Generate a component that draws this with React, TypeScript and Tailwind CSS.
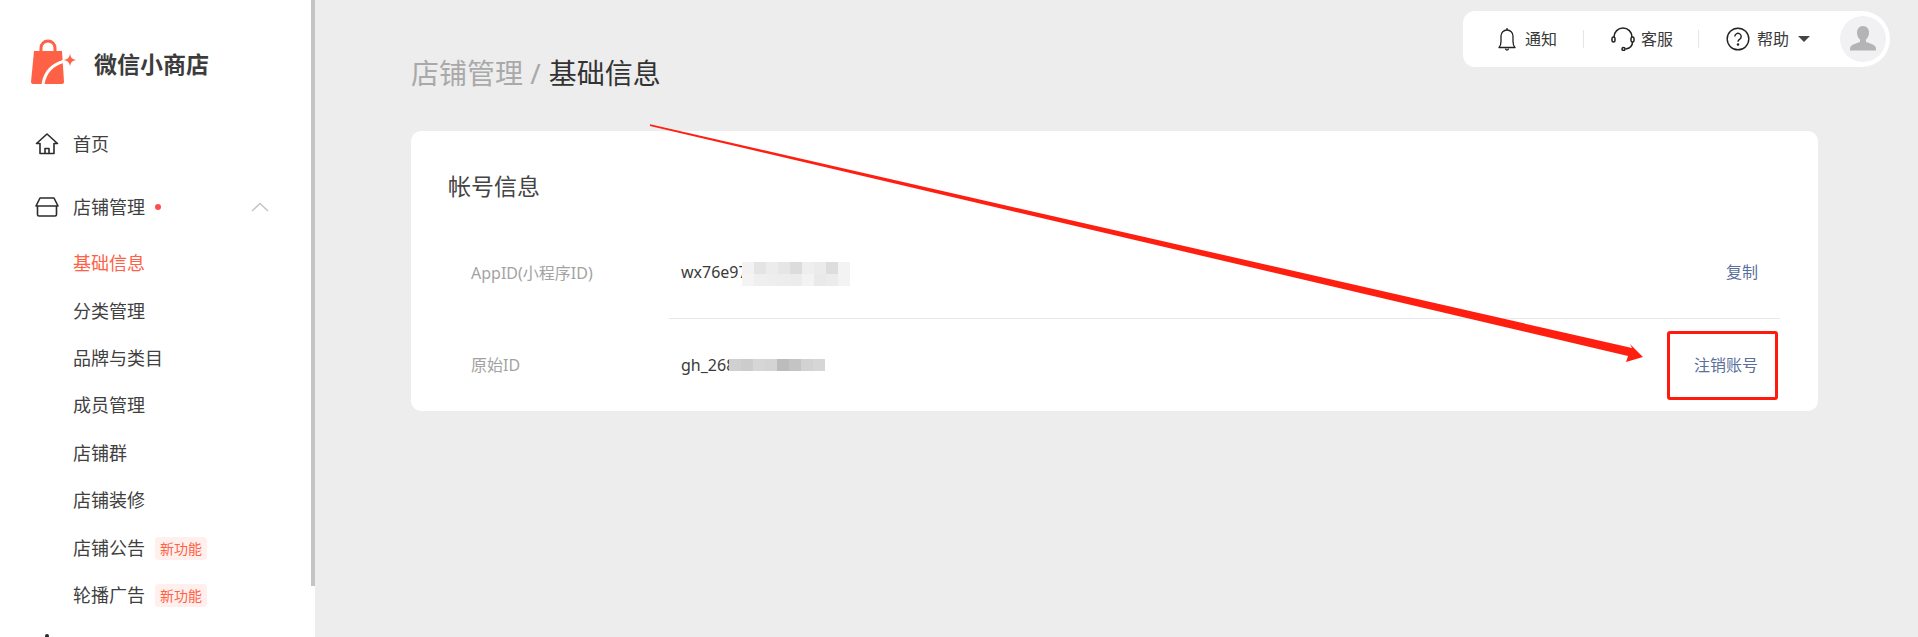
const subItems = [
  { label: "基础信息", active: true },
  { label: "分类管理" },
  { label: "品牌与类目" },
  { label: "成员管理" },
  { label: "店铺群" },
  { label: "店铺装修" },
  { label: "店铺公告", badge: true },
  { label: "轮播广告", badge: true },
];

const appIdCells = [
  ["bg-[#f2f2f2]", "bg-[#e4e4e4]", "bg-[#ececec]", "bg-[#e6e6e6]", "bg-[#dcdcdc]", "bg-[#eeeeee]", "bg-[#ebebeb]", "bg-[#dddddd]", "bg-[#f3f3f3]"],
  ["bg-[#f4f4f4]", "bg-[#efefef]", "bg-[#eeeeee]", "bg-[#ededed]", "bg-[#ececec]", "bg-[#f3f3f3]", "bg-[#e9e9e9]", "bg-[#ececec]", "bg-[#f3f3f3]"],
];

const rawIdCells = [
  "bg-[#d0d0d0]", "bg-[#cccccc]", "bg-[#d6d6d6]", "bg-[#d4d4d4]", "bg-[#bcbcbc]", "bg-[#c4c4c4]", "bg-[#d2d2d2]", "bg-[#d6d6d6]",
];

function Logo() {
  return (
    <svg width="48" height="50" viewBox="0 0 48 50" className="shrink-0">
      <path d="M11 13V9a7 7 0 0 1 14 0v4" fill="none" stroke="#ff6146" strokeWidth="3" />
      <path d="M4 12h28l2 31a2 2 0 0 1-2 2H3a2 2 0 0 1-2-2z" fill="#ff6146" />
      <path d="M13 45c2-12 10-20 22-23" fill="none" stroke="#fff" strokeWidth="3" />
      <path d="M40 15c1 4 2 5 6 6-4 1-5 2-6 6-1-4-2-5-6-6 4-1 5-2 6-6z" fill="#ff6146" />
    </svg>
  );
}

function HomeIcon() {
  return (
    <svg width="24" height="22" viewBox="0 0 24 22" fill="none" stroke="#2b2b2b" strokeWidth="1.6" strokeLinejoin="round">
      <path d="M1.500 10.500 12 1l10.500 9.500h-3.500V20.500H5V10.500z" />
      <path d="M10 20.500v-5h4v5" />
    </svg>
  );
}

function StoreIcon() {
  return (
    <svg width="24" height="20" viewBox="0 0 24 20" fill="none" stroke="#2b2b2b" strokeWidth="1.6" strokeLinejoin="round">
      <path d="M5 1h14l4 8H1z" />
      <path d="M2.500 9v8.500a1.500 1.500 0 0 0 1.500 1.500h16a1.500 1.500 0 0 0 1.500-1.500V9" />
    </svg>
  );
}

function BellIcon() {
  return (
    <svg width="18" height="24" viewBox="0 0 18 24" fill="none" stroke="#222" strokeWidth="1.3" strokeLinejoin="round">
      <path d="M1 20.500c1.500-1.500 2-3 2-6V9a6 6 0 0 1 12 0v5.500c0 3 .5 4.500 2 6z" />
      <path d="M9 3V1M7.500 21.500a1.500 1.500 0 0 0 3 0" />
    </svg>
  );
}

function HeadsetIcon() {
  return (
    <svg width="24" height="24" viewBox="0 0 24 24" fill="none" stroke="#222" strokeWidth="1.5">
      <path d="M3 10a9 9 0 0 1 18 0" />
      <rect x="1" y="10" width="3" height="5" rx="1.500" />
      <rect x="20" y="10" width="3" height="5" rx="1.500" />
      <path d="M21.500 15c0 4-3 6.500-7 7" />
      <circle cx="12.500" cy="22" r="1.500" />
    </svg>
  );
}

function HelpIcon() {
  return (
    <svg width="24" height="24" viewBox="0 0 24 24" fill="none" stroke="#222" strokeWidth="1.4">
      <circle cx="12" cy="12" r="10.800" />
      <path d="M8.800 9.500a3.200 3.200 0 1 1 4.800 2.800c-1 .6-1.600 1.200-1.600 2.500" />
      <circle cx="12" cy="17.500" r=".6" fill="#222" />
    </svg>
  );
}

function AvatarIcon() {
  return (
    <svg width="26" height="26" viewBox="0 0 26 26" fill="#b4b4b6">
      <path d="M13 0c4 0 6 3 6 6.500 0 3-1.200 5.500-3 7v2.500c3 1.200 7 2 9 4 1 1 1 3 1 4.500H0c0-1.500 0-3.500 1-4.500 2-2 6-2.800 9-4v-2.500c-1.800-1.500-3-4-3-7C7 3 9 0 13 0z" />
    </svg>
  );
}

function Badge() {
  return (
    <span className="ml-[10px] flex h-[23px] w-[52px] items-center justify-center rounded-[4px] bg-[#fff0ee] text-[14px] text-[#ff6146]">
      新功能
    </span>
  );
}

function Sidebar() {
  return (
    <aside className="relative h-full w-[315px] shrink-0 overflow-hidden bg-white text-[18px] text-[#404040]">
      <div className="flex h-[115px] items-center pt-[13px] pl-[30px]">
        <Logo />
        <span className="ml-[16px] text-[23px] leading-[30px] font-bold text-[#3c3c3c]">微信小商店</span>
      </div>
      <nav>
        <div className="flex h-[58px] items-center pl-[35px]">
          <HomeIcon />
          <span className="ml-[14px]">首页</span>
        </div>
        <div className="mt-[5px] flex h-[58px] items-center pl-[35px]">
          <StoreIcon />
          <span className="ml-[14px]">店铺管理</span>
          <span className="ml-[10px] h-[6px] w-[6px] rounded-full bg-[#ff4d4f]" />
          <svg width="18" height="10" viewBox="0 0 18 10" fill="none" stroke="#c4c4c4" strokeWidth="1.5" className="ml-auto mr-[46px]">
            <path d="M1 9 9 1.500 17 9" />
          </svg>
        </div>
        <div className="mt-[4px]">
          {subItems.map((item) => (
            <div key={item.label} className="flex h-[47.4px] items-center pl-[73px]">
              <span className={item.active ? "text-[#ff6146]" : ""}>{item.label}</span>
              {item.badge && <Badge />}
            </div>
          ))}
        </div>
        <div className="mt-[15px] pl-[45px]">
          <div className="h-[4px] w-[4px] rounded-full bg-[#2b2b2b]" />
        </div>
      </nav>
      <div className="absolute top-0 right-0 h-[586px] w-[4px] bg-[#c4c4c4]" />
    </aside>
  );
}

function TopBar() {
  return (
    <div className="flex h-[56px] w-[427px] items-center self-end rounded-l-[12px] rounded-r-[28px] bg-white text-[16px] text-[#3a3a3a]">
      <div className="ml-[35px] flex items-center">
        <BellIcon />
        <span className="ml-[9px]">通知</span>
      </div>
      <div className="ml-[26px] h-[18px] w-px bg-[#e6e6e6]" />
      <div className="ml-[27px] flex items-center">
        <HeadsetIcon />
        <span className="ml-[6px]">客服</span>
      </div>
      <div className="ml-[25px] h-[18px] w-px bg-[#e6e6e6]" />
      <div className="ml-[27px] flex items-center">
        <HelpIcon />
        <span className="ml-[7px]">帮助</span>
        <span className="ml-[9px] h-0 w-0 border-x-[6px] border-t-[6px] border-x-transparent border-t-[#444]" />
      </div>
      <div className="mr-[4px] ml-auto flex h-[46px] w-[46px] items-center justify-center rounded-full bg-[#f1f1f3]">
        <AvatarIcon />
      </div>
    </div>
  );
}

function AccountCard() {
  return (
    <section className="relative mt-[39px] h-[280px] w-[1407px] rounded-[10px] bg-white">
      <h2 className="flex h-[95px] items-center pt-[15px] pl-[37px] text-[23px] font-normal text-[#444444]">帐号信息</h2>
      <div className="flex h-[93px]">
        <div className="flex w-[258px] shrink-0 items-center pl-[60px] text-[#a3a3a3]">AppID(小程序ID)</div>
        <div className="mr-[38px] flex flex-1 items-center border-b border-[#e8e8ec] pr-[22px] pl-[12px]">
          <span className="text-[#3a3a3a]">wx76e97</span>
          <div className="relative -ml-[6px] mt-[4px]">
            {appIdCells.map((row, i) => (
              <div key={i} className="flex">
                {row.map((c, j) => (
                  <div key={j} className={`h-[12px] w-[12px] ${c}`} />
                ))}
              </div>
            ))}
          </div>
          <span className="ml-auto text-[#5b6f9c]">复制</span>
        </div>
      </div>
      <div className="flex h-[91px]">
        <div className="flex w-[258px] shrink-0 items-center pl-[60px] text-[#a3a3a3]">原始ID</div>
        <div className="mr-[38px] flex flex-1 items-center pr-[22px] pl-[12px]">
          <span className="text-[#3a3a3a]">gh_268</span>
          <div className="relative -ml-[6px] flex">
            {rawIdCells.map((c, i) => (
              <div key={i} className={`h-[12px] w-[12px] ${c}`} />
            ))}
          </div>
          <span className="ml-auto text-[#5b6f9c]">注销账号</span>
        </div>
      </div>
    </section>
  );
}

export default function App() {
  return (
    <div
      className="relative flex h-[637px] w-[1918px] overflow-hidden bg-[#ededed] text-[16px]"
      style={{ fontFamily: '"Noto Sans", "Noto Sans CJK SC", sans-serif' }}
    >
      <Sidebar />
      <main className="flex flex-1 flex-col pt-[11px] pr-[28px] pl-[96px]">
        <TopBar />
        <h1 className="-mt-[13px] text-[28px] leading-[38px] font-normal text-[#a9a9a9]">
          店铺管理 /<span className="ml-[8px] text-[#333333]">基础信息</span>
        </h1>
        <AccountCard />
      </main>

      {/* annotation drawn on top of the screenshot */}
      <svg className="pointer-events-none absolute inset-0" width="1918" height="637">
        <polygon points="650,124.300 1632,348 1630,344 1643,357 1626,362 1628,356 650,126" fill="#ff1f10" />
      </svg>
      <div className="absolute top-[331px] left-[1667px] h-[69px] w-[111px] rounded-[3px] border-[3px] border-[#ff1a0d]" />
    </div>
  );
}
